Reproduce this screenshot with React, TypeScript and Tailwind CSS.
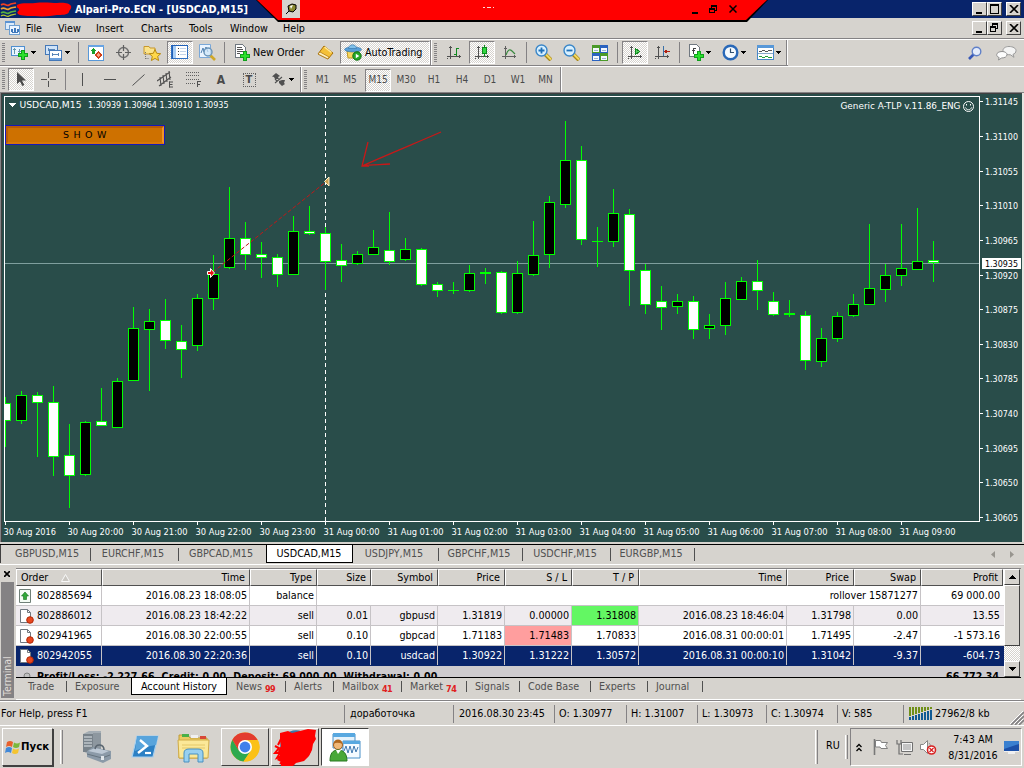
import type { ReactNode } from 'react';
import clsx from 'clsx';

const DITHER =
  'bg-[repeating-conic-gradient(#ffffff_0_25%,#d6d3ce_0_50%)] bg-[length:2px_2px]';
const RAISED =
  'border border-t-white border-l-white border-r-[#404040] border-b-[#404040] bg-[#d6d3ce]';
const SUNKEN =
  'border border-t-[#848284] border-l-[#848284] border-r-white border-b-white';

/* x step is 16px; values are [high, top, bottom, low, bull] in chart pixels */
type Candle = [number, number, number, number, 0 | 1];

const CANDLES: Candle[] = [
  [397, 403, 420, 447, 0], [391, 395, 420, 424, 1], [392, 395, 402, 457, 0], [386, 402, 456, 476, 0],
  [424, 455, 475, 508, 0], [421, 422, 474, 476, 1], [388, 421, 425, 426, 0], [378, 381, 427, 428, 1],
  [307, 328, 380, 381, 1], [309, 321, 329, 391, 1], [299, 320, 340, 349, 0], [325, 341, 349, 378, 0],
  [294, 298, 345, 351, 1], [255, 274, 298, 310, 1], [187, 238, 267, 269, 1], [222, 238, 254, 270, 0],
  [242, 254, 257, 278, 0], [254, 257, 274, 287, 0], [216, 231, 274, 275, 1], [206, 231, 233, 235, 0],
  [227, 233, 261, 290, 0], [244, 260, 265, 282, 0], [251, 254, 263, 265, 1], [230, 247, 254, 255, 1],
  [212, 250, 261, 265, 0], [238, 249, 259, 261, 1], [248, 249, 284, 286, 0], [282, 284, 290, 297, 0],
  [282, 290, 290, 294, 1], [265, 273, 290, 292, 1], [268, 272, 273, 284, 1], [271, 272, 312, 314, 0],
  [261, 273, 312, 314, 1], [221, 255, 274, 276, 1], [196, 202, 254, 268, 1], [121, 160, 204, 208, 1],
  [146, 160, 239, 245, 0], [227, 241, 241, 267, 1], [189, 213, 241, 247, 1], [209, 214, 270, 306, 0],
  [264, 270, 304, 314, 0], [286, 301, 307, 330, 0], [294, 301, 306, 314, 1], [296, 301, 329, 339, 0],
  [314, 325, 328, 339, 1], [282, 298, 325, 335, 1], [277, 281, 299, 300, 1], [260, 281, 290, 310, 0],
  [292, 301, 314, 316, 0], [300, 313, 314, 317, 1], [311, 315, 360, 370, 0], [328, 338, 361, 367, 1],
  [312, 316, 338, 342, 1], [294, 304, 315, 317, 1], [224, 288, 304, 305, 1], [264, 275, 289, 302, 1],
  [224, 268, 275, 286, 1], [208, 261, 269, 270, 1], [241, 260, 262, 282, 0],
];

const PRICES = [
  '1.31145', '1.31100', '1.31055', '1.31010', '1.30965', '1.30920', '1.30875',
  '1.30830', '1.30785', '1.30740', '1.30695', '1.30650', '1.30605',
];

const TIMES = [
  '30 Aug 2016', '30 Aug 20:00', '30 Aug 21:00', '30 Aug 22:00', '30 Aug 23:00',
  '31 Aug 00:00', '31 Aug 01:00', '31 Aug 02:00', '31 Aug 03:00', '31 Aug 04:00',
  '31 Aug 05:00', '31 Aug 06:00', '31 Aug 07:00', '31 Aug 08:00', '31 Aug 09:00',
];

interface IconProps {
  readonly w?: number;
  readonly h?: number;
  readonly smooth?: boolean;
  readonly children: ReactNode;
}

function Icon({ w = 16, h = 16, smooth = false, children }: IconProps) {
  return (
    <svg
      width={w}
      height={h}
      viewBox={`0 0 ${w} ${h}`}
      fill="none"
      className="block shrink-0"
      shapeRendering={smooth ? 'auto' : 'crispEdges'}
    >
      {children}
    </svg>
  );
}

function Slot({ w, pressed, children }: { w: string; pressed?: boolean; children: ReactNode }) {
  return (
    <div className={clsx('flex h-full shrink-0 items-center justify-center', w)}>
      {pressed ? (
        <div className={clsx('flex h-[23px] w-[26px] items-center justify-center', SUNKEN, DITHER)}>
          {children}
        </div>
      ) : (
        children
      )}
    </div>
  );
}

function Sep({ w = 'w-[7px]' }: { w?: string }) {
  return (
    <div className={clsx('flex h-full shrink-0 items-center justify-center', w)}>
      <div className="h-[21px] w-px bg-[#848284]" />
    </div>
  );
}

function Grip() {
  return (
    <div className="flex h-full w-[8px] shrink-0 items-center pl-[2px]">
      <div className="h-[19px] w-[3px] bg-[repeating-linear-gradient(#848284_0_1px,#d6d3ce_1px_2px)]" />
    </div>
  );
}

function Caret() {
  return (
    <Icon w={5} h={3}>
      <path d="M0 0h5v1H0zM1 1h3v1H1zM2 2h1v1H2z" fill="#000" />
    </Icon>
  );
}

function Plus({ x, y }: { x: number; y: number }) {
  return (
    <path
      d={`M${x + 3.5} ${y + 0.5}h3v3h3v3h-3v3h-3v-3h-3v-3h3z`}
      fill="#2be02b"
      stroke="#0fa01c"
    />
  );
}

/* ---------- title bar ---------- */

function WinButtons({ restore }: { restore?: boolean }) {
  const btn = clsx('flex h-[14px] w-[15px] items-center justify-center', RAISED);
  return (
    <div className="mr-[3px] flex items-center">
      <div className={btn}>
        <Icon w={11} h={10}><path d="M2 8h6v2H2z" fill="#000" /></Icon>
      </div>
      <div className={btn}>
        <Icon w={11} h={10}>
          {restore ? (
            <path d="M3 0h6v6H7v3H1V3h2zM4 2v1h3v2h1V2zM2 5v3h4V5z" fill="#000" fillRule="evenodd" />
          ) : (
            <path d="M1 0h9v10H1zM2 2v7h7V2z" fill="#000" fillRule="evenodd" />
          )}
        </Icon>
      </div>
      <div className={clsx(btn, 'ml-[4px]')}>
        <Icon w={10} h={8} smooth><path d="M1 0l8 8M9 0l-8 8" stroke="#000" strokeWidth="1.6" /></Icon>
      </div>
    </div>
  );
}

function ConnectionBar() {
  return (
    <div className="absolute left-[256px] top-0 h-[22px] w-[512px] bg-black [clip-path:polygon(0_0,100%_0,491px_100%,22px_100%)]">
      <div className="flex h-[21px] items-start bg-[#ff0000] [clip-path:polygon(1px_0,511px_0,490px_20px,22px_20px)]">
        <div className="ml-[26px] flex h-[18px] w-[18px] items-center justify-center bg-[#d6d3ce]">
          <Icon w={12} h={12} smooth>
            <path d="M1 11l4-4" stroke="#000" />
            <path d="M3 3l4-2 4 1v4l-3 3-4-1z" fill="#8a8a30" stroke="#000" />
            <path d="M5 3l3-1-2 4z" fill="#fff" />
          </Icon>
        </div>
        <div className="ml-[182px] mt-[6px]">
          <Icon w={12} h={2}><path d="M1 1h2M5 1h4M11 1h1" stroke="#ffd8d8" /></Icon>
        </div>
        <div className="ml-[197px] mt-[4px] flex items-center">
          <Icon w={7} h={10}><path d="M1 8h6v2H1z" fill="#000" /></Icon>
          <div className="ml-[11px]">
            <Icon w={9} h={10}>
              <path d="M2 1h6v6H6v2H0V4h2zM3 3v1h3v2h1V3zM1 6v2h4V6z" fill="#000" fillRule="evenodd" />
            </Icon>
          </div>
          <div className="ml-[11px]">
            <Icon w={8} h={8} smooth><path d="M.5 .5l7 7M7.5.5l-7 7" stroke="#000" strokeWidth="1.5" /></Icon>
          </div>
        </div>
      </div>
    </div>
  );
}

function TitleBar() {
  return (
    <div className="relative flex h-[18px] shrink-0 items-center bg-[#08246b] text-white">
      <Icon w={75} h={18} smooth>
        <path d="M1 5c4-3 5 2 8 0s4-1 7-2" stroke="#f04020" strokeWidth="1.6" />
        <path d="M1 9c4-3 5 2 8 0s4-1 7-2" stroke="#f0a030" strokeWidth="1.6" />
        <path d="M1 13c4-3 5 2 8 0s4-1 7-2" stroke="#58b040" strokeWidth="1.6" />
        <path d="M1 16c4-3 5 2 8 0s4-1 7-2" stroke="#b8c830" strokeWidth="1.3" />
        <path
          d="M17 5c6-3 12-1 18-2 9-1 17 0 22 0 6-1 13 0 14 3 1 3-2 4-2 6-1 3-8 3-12 3-6 1-14 2-22 1-6 0-14 0-17-2-2-3 2-3 1-5-1-1-3-2-2-4z"
          fill="#ff0000"
        />
      </Icon>
      <span className="pt-px text-[10.8px] font-bold">Alpari-Pro.ECN - [USDCAD,M15]</span>
      <div className="ml-auto"><WinButtons /></div>
      <ConnectionBar />
    </div>
  );
}

const MENU = [
  { label: 'File', w: 'w-[32px]' },
  { label: 'View', w: 'w-[38px]' },
  { label: 'Insert', w: 'w-[45px]' },
  { label: 'Charts', w: 'w-[48px]' },
  { label: 'Tools', w: 'w-[41px]' },
  { label: 'Window', w: 'w-[53px]' },
  { label: 'Help', w: 'w-[40px]' },
];

function MenuBar() {
  return (
    <div className="flex h-[21px] shrink-0 items-center border-b border-[#848284] pl-[5px] text-black">
      <div className="w-[21px]">
        <Icon w={15} h={14}>
          <path d="M.5 .5h9v8h-9z" fill="#dcebfa" stroke="#6f9fd0" />
          <path d="M0 0h10v2H0z" fill="#5b93d2" />
          <path d="M4.5 4.5h10v9h-10z" fill="#eef6ff" stroke="#6f9fd0" />
          <path d="M6 11V8h1v3h2V7h1v4h2V8h1v3" stroke="#3f78bb" />
        </Icon>
      </div>
      {MENU.map((m) => (
        <span key={m.label} className={clsx('pt-px', m.w)}>{m.label}</span>
      ))}
      <div className="ml-auto"><WinButtons restore /></div>
    </div>
  );
}

/* ---------- toolbars ---------- */

function Axes() {
  return (
    <>
      <path d="M3.5 1v13M0 11.5h14" stroke="#505050" />
      <path d="M2 2h3v1H2zM12 10h1v3h-1zM0 13h1v1H0z" fill="#505050" />
    </>
  );
}

function Lens({ minus }: { minus?: boolean }) {
  return (
    <Icon w={17} h={17} smooth>
      <path d="M10 10l6 6" stroke="#a88818" strokeWidth="4" />
      <path d="M10.5 10l5.5 5.5" stroke="#f4d860" strokeWidth="2" />
      <circle cx="6.5" cy="6.5" r="5.5" fill="#d8f0ff" stroke="#3a86c8" strokeWidth="1.4" />
      <path d={minus ? 'M3.5 6.5h6' : 'M3.5 6.5h6M6.5 3.5v6'} stroke="#2070b8" strokeWidth="1.8" />
    </Icon>
  );
}

function StandardToolbar() {
  return (
    <div className="flex h-[27px] shrink-0 border-t border-white">
      <div className="flex h-[26px] items-center border-b border-[#848284]">
        <Grip />
        <div className="flex w-[28px] items-center pl-[3px]">
          <Icon w={18} h={16}>
            <path d="M.5 1.5h13v9H.5z" fill="#eaf4ff" stroke="#4f8fd0" />
            <path d="M3 3v6M2 4h3M8 4v4M7 6h3" stroke="#69a" />
            <Plus x={7} y={5} />
          </Icon>
          <div className="ml-[2px]"><Caret /></div>
        </div>
        <div className="flex w-[38px] items-center pl-[9px]">
          <Icon w={18} h={16}>
            <path d="M.5 .5h12v9H.5z" fill="#cfe3f8" stroke="#4478b8" />
            <path d="M4.5 5.5h12v10h-12z" fill="#fff" stroke="#4478b8" />
            <path d="M5 13h11v2H5z" fill="#6ca0dc" />
            <path d="M3 4.5h7M3 3v3M7 9.5h7M7 8v3M13 8v3" stroke="#5885b8" />
          </Icon>
          <div className="ml-[2px]"><Caret /></div>
        </div>
        <Sep w="w-[8px]" />
        <Slot w="w-[27px]">
          <Icon>
            <path d="M.5 .5h15v15H.5z" fill="#fff" stroke="#5898d8" />
            <path d="M0 0h16v2H0z" fill="#68a4e4" />
            <path d="M5.5 3l3 3-1.5 0v3H4V6H2.5z" fill="#18a028" />
            <path d="M10.5 7l3 3-3 3-3-3z" fill="#f8a080" stroke="#d04018" />
          </Icon>
        </Slot>
        <Slot w="w-[28px]">
          <Icon w={15} h={15} smooth>
            <circle cx="7.5" cy="7.5" r="5" stroke="#707070" strokeWidth="1.4" />
            <path d="M7.5 0v6M7.5 9v6M0 7.5h6M9 7.5h6" stroke="#606060" strokeWidth="1.2" />
          </Icon>
        </Slot>
        <Slot w="w-[29px]">
          <Icon w={18} h={17} smooth>
            <path d="M1 2.500h5l1 1.500h5v6H1z" fill="#fbe38a" stroke="#c8982c" />
            <path d="M2.5 8v7M2.5 14.500h4" stroke="#777" strokeDasharray="1 1" />
            <path d="M12 5.5l1.700 3.800 4 .4-3 2.700.9 4.100-3.600-2.100-3.600 2.100.9-4.100-3-2.700 4-.4z" fill="#ffd84a" stroke="#b88a10" />
          </Icon>
        </Slot>
        <Slot w="w-[27px]" pressed>
          <Icon w={17} h={15}>
            <path d="M.5 .5h16v13H.5z" fill="#fff" stroke="#2f6fc0" />
            <path d="M1 1h4v12H1z" fill="#a8cdf4" />
            <path d="M0 0h17v1H0zM1 1h1v13H1z" fill="#2060b8" />
            <path d="M7 3.5h1M7 6.5h1M7 9.5h1" stroke="#444" />
            <path d="M9 3.5h6M9 6.5h6M9 9.5h6" stroke="#c4d4e8" />
          </Icon>
        </Slot>
        <Slot w="w-[28px]">
          <Icon w={17} h={17} smooth>
            <path d="M.5 .5h11v13H.5z" fill="#eaf4ff" stroke="#7aa8d8" />
            <path d="M2 9l2-5 1 4 2-5 2 5" stroke="#5080b0" />
            <path d="M11 11l5 5" stroke="#d0a828" strokeWidth="2.6" />
            <circle cx="9" cy="8" r="4" fill="#cde6f8" fillOpacity=".7" stroke="#6a94b8" strokeWidth="1.4" />
          </Icon>
        </Slot>
        <Sep />
        <div className="flex w-[82px] items-center pl-[6px]">
          <Icon w={17} h={17}>
            <path d="M1.5 .5h7l3 3v10h-10z" fill="#fff" stroke="#707880" />
            <path d="M3 3.5h5M3 5.5h6M3 7.5h6M3 9.5h3" stroke="#555" />
            <Plus x={6} y={7} />
          </Icon>
          <span className="ml-[2px] text-black">New Order</span>
        </div>
        <Slot w="w-[30px]">
          <Icon w={17} h={15} smooth>
            <path d="M7 1l9 7-5 6-10-5z" fill="#f4c038" stroke="#a87008" />
            <path d="M1 9l2-2 9 5-1 2z" fill="#fff0c0" stroke="#a87008" strokeWidth=".7" />
            <path d="M7.5 2l7 5.5" stroke="#ffe898" strokeWidth="1.5" />
          </Icon>
        </Slot>
        <div className={clsx('flex h-[23px] w-[90px] items-center pl-[3px]', SUNKEN, DITHER)}>
          <Icon w={18} h={17} smooth>
            <path d="M3 7h12l-2 7H4z" fill="#f8d860" stroke="#c09820" />
            <ellipse cx="9" cy="5.5" rx="8.5" ry="2.5" fill="#58a0d8" stroke="#3070a8" strokeWidth=".6" />
            <path d="M4.5 4.5c0-5 8-5 8 0z" fill="#80c0e8" stroke="#3070a8" strokeWidth=".6" />
            <circle cx="13" cy="12" r="4.2" fill="#28a828" stroke="#107010" />
            <path d="M11.8 9.8l3.5 2.2-3.5 2.2z" fill="#fff" />
          </Icon>
          <span className="ml-[3px] text-black">AutoTrading</span>
        </div>
      </div>
      <div className="flex h-[26px] items-center border-b border-l border-b-[#848284] border-l-[#848284]">
        <div className="h-full w-px bg-white" />
        <Grip />
        <Slot w="w-[28px]">
          <Icon w={15} h={15}>
            <Axes />
            <path d="M9.5 3v8M10 3.5h2M7 9.5h2" stroke="#108a20" />
          </Icon>
        </Slot>
        <Slot w="w-[28px]" pressed>
          <Icon w={15} h={15}>
            <Axes />
            <path d="M9.5 0v12" stroke="#108a20" />
            <path d="M7.5 2.5h4v6h-4z" fill="#30d840" stroke="#108a20" />
          </Icon>
        </Slot>
        <Slot w="w-[27px]">
          <Icon w={15} h={15} smooth>
            <path d="M3.5 1v13M0 11.5h14" stroke="#606060" />
            <path d="M2 3.5h3M12.500 10v3" stroke="#606060" />
            <path d="M4 10c2-6 4-6 6-4l3 3" stroke="#3a8a40" strokeWidth="1.2" />
          </Icon>
        </Slot>
        <Sep />
        <Slot w="w-[27px]"><Lens /></Slot>
        <Slot w="w-[29px]"><Lens minus /></Slot>
        <Slot w="w-[28px]">
          <Icon w={16} h={16}>
            <path d="M0 0h8v8H0z" fill="#4a9a28" />
            <path d="M8 0h8v8H8z" fill="#2a62c0" />
            <path d="M0 8h8v8H0z" fill="#2a62c0" />
            <path d="M8 8h8v8H8z" fill="#4a9a28" />
            <path d="M1 3h6v4H1zM9 3h6v4H9zM1 11h6v4H1zM9 11h6v4H9z" fill="#f4f8ff" />
            <path d="M2 5h4M10 5h4M2 13h4M10 13h4" stroke="#9ab4d0" />
          </Icon>
        </Slot>
        <Sep />
        <Slot w="w-[28px]" pressed>
          <Icon w={15} h={15}>
            <Axes />
            <path d="M7.5 3.5l4 3-4 3z" fill="#58d060" stroke="#108a20" />
          </Icon>
        </Slot>
        <Slot w="w-[27px]">
          <Icon w={15} h={15}>
            <Axes />
            <path d="M8.5 1v10" stroke="#3a70a8" />
            <path d="M9 6h6v1H9zM10 5h2v3h-2z" fill="#b02010" />
          </Icon>
        </Slot>
        <Sep />
        <div className="flex w-[31px] items-center pl-[6px]">
          <Icon w={16} h={17}>
            <path d="M.5 .5h7l3 3v9H.5z" fill="#fff" stroke="#707880" />
            <path d="M4 10V4h3M3 6.5h3" stroke="#444" />
            <Plus x={5} y={7} />
          </Icon>
          <div className="ml-px"><Caret /></div>
        </div>
        <div className="flex w-[35px] items-center pl-[8px]">
          <Icon w={17} h={17} smooth>
            <circle cx="8.5" cy="8.5" r="6.8" fill="#f4faff" stroke="#2868b8" strokeWidth="2.4" />
            <path d="M8.5 4.5v4h3.5" stroke="#305070" strokeWidth="1.2" />
          </Icon>
          <div className="ml-[2px]"><Caret /></div>
        </div>
        <div className="flex w-[37px] items-center pl-[8px]">
          <Icon w={17} h={15}>
            <path d="M.5 .5h16v14H.5z" fill="#fff" stroke="#4888c8" />
            <path d="M0 0h17v3H0z" fill="#5898d8" />
            <path d="M2 6.500h3M5 5.500h3M8 6.500h3M11 5.500h4" stroke="#555" />
            <path d="M1 8.5h15" stroke="#88a8c8" />
            <path d="M2 11.500h3M5 12.500h3M8 11.500h3M11 12.500h4" stroke="#28a038" />
          </Icon>
          <div className="ml-[2px]"><Caret /></div>
        </div>
        <div className="h-full w-px bg-[#848284]" />
        <div className="h-full w-px bg-white" />
      </div>
      <div className="ml-auto mr-[7px] flex items-center gap-[14px]">
        <Icon w={14} h={14} smooth>
          <path d="M1 13l5-5" stroke="#3858b8" strokeWidth="2.6" />
          <circle cx="8.5" cy="5.5" r="4.3" fill="#e4ecfc" stroke="#6080c8" strokeWidth="1.4" />
        </Icon>
        <Icon w={21} h={16} smooth>
          <path d="M13 1.5c4 0 7 1.800 7 4s-1.500 3.500-3 3.800l1 3-3.500-2.500c-5 0-7.500-2-7.500-4.300s2.500-4 6-4z" fill="#f4f4f4" stroke="#9a9a9a" />
          <path d="M6 6.5c3 0 5 1.400 5 3.200s-2 3.300-5.500 3.300L2.500 15l.6-2.500C1.500 12 .7 11 .7 9.700.7 8 3 6.500 6 6.500z" fill="#fdfdfd" stroke="#909090" />
        </Icon>
      </div>
    </div>
  );
}

const PERIODS = [
  { label: 'M1', w: 'w-[27px]' },
  { label: 'M5', w: 'w-[28px]' },
  { label: 'M15', w: 'w-[28px]', active: true },
  { label: 'M30', w: 'w-[28px]' },
  { label: 'H1', w: 'w-[28px]' },
  { label: 'H4', w: 'w-[28px]' },
  { label: 'D1', w: 'w-[28px]' },
  { label: 'W1', w: 'w-[28px]' },
  { label: 'MN', w: 'w-[27px]' },
];

function LineToolbar() {
  return (
    <div className="flex h-[26px] shrink-0 items-center border-t border-white text-[#4a4a4a]">
      <Grip />
      <Slot w="w-[26px]" pressed>
        <Icon w={10} h={15} smooth>
          <path d="M1 0v12l3-2.500L6.300 14l2-1L6 8.500h4z" fill="#4a4a4a" />
        </Icon>
      </Slot>
      <Slot w="w-[29px]">
        <Icon w={15} h={15}>
          <path d="M7.5 0v6M7.5 9v6M0 7.5h6M9 7.5h6" stroke="#505050" />
        </Icon>
      </Slot>
      <Sep w="w-[5px]" />
      <Slot w="w-[28px]">
        <Icon w={3} h={13}><path d="M1.5 0v13" stroke="#505050" /></Icon>
      </Slot>
      <Slot w="w-[28px]">
        <Icon w={12} h={3}><path d="M0 1.5h12" stroke="#505050" /></Icon>
      </Slot>
      <Slot w="w-[28px]">
        <Icon w={13} h={12} smooth><path d="M.5 11.5l12-11" stroke="#505050" /></Icon>
      </Slot>
      <Slot w="w-[27px]">
        <Icon w={17} h={17} smooth>
          <path d="M0 10L13 1M2 15l12-9M3 6l1 9M6 4l1 9M9 2l1 9M12 0l1 9" stroke="#505050" strokeWidth="1.1" />
          <path d="M12.5 10.5v6M12 11h4M12 13.5h3.500M12 16h4" stroke="#505050" />
        </Icon>
      </Slot>
      <Slot w="w-[28px]">
        <Icon w={15} h={17}>
          <path d="M0 1.5h14M0 4.5h14M0 8.5h14M0 12.5h9" stroke="#606060" strokeDasharray="1 1" />
          <path d="M11.5 10v6M11 10.5h4M11 13.5h3" stroke="#505050" />
        </Icon>
      </Slot>
      <Slot w="w-[28px]"><span className="text-[12px] font-bold">A</span></Slot>
      <Slot w="w-[28px]">
        <div className="flex h-[14px] w-[13px] items-center justify-center border border-dotted border-[#606060] text-[11px] font-bold leading-none">
          T
        </div>
      </Slot>
      <div className="flex w-[37px] items-center pl-[9px]">
        <Icon w={14} h={13} smooth>
          <path d="M4 0l4 3-2 1 1 2H3L2 4 0 3.500z" fill="#505050" />
          <path d="M3 10l7-6M3 6l2 2" stroke="#505050" strokeWidth="1.1" />
          <path d="M7 8l3-1h3l-1 3 1 1-3 2-3-3z" fill="#505050" />
        </Icon>
        <div className="ml-[3px]"><Caret /></div>
      </div>
      <div className="h-full w-px bg-[#848284]" />
      <div className="h-full w-px bg-white" />
      <Grip />
      <div className="-ml-px flex h-full items-center pt-px text-[10px]">
        {PERIODS.map((p) => (
          <Slot key={p.label} w={p.w} pressed={p.active}>{p.label}</Slot>
        ))}
      </div>
      <div className="ml-px h-full w-px bg-[#848284]" />
      <div className="h-full w-px bg-white" />
    </div>
  );
}

/* ---------- chart ---------- */

function Chart() {
  const lime = '#00ff00';
  return (
    <div className="relative flex h-[452px] shrink-0 flex-col border-b-2 border-b-[#d6d3ce]">
      <svg
        width="1024"
        height="450"
        viewBox="0 92 1024 450"
        className="block"
        shapeRendering="crispEdges"
        fontSize="9.4"
        fill="#fff"
      >
        <rect x="0" y="92" width="1024" height="450" fill="#294d4a" />
        <path d="M0 92h1024v1H0zM0 92h1v450H0z" fill="#848284" />
        <path d="M1 93h1022v1H1zM1 93h1v449H1z" fill="#404040" />
        <path d="M1022 93h2v449h-2z" fill="#e8e6e2" />
        <path d="M5 263.5h974" stroke="#7f9f9e" />
        <path d="M325.5 97v424" stroke="#fff" strokeDasharray="4 3" />
        {CANDLES.map(([high, top, bottom, low, bull], i) => {
          const x = 5 + i * 16;
          const left = Math.max(x - 5, 4);
          return (
            <g key={x}>
              <path d={`M${x + 0.5} ${high}V${low}`} stroke={lime} strokeWidth="1" />
              <rect x={left} y={top} width={x + 6 - left} height={bottom - top + 1} fill={lime} />
              {bottom - top > 1 && (
                <rect
                  x={left + 1}
                  y={top + 1}
                  width={x + 4 - left}
                  height={bottom - top - 1}
                  fill={bull ? '#000' : '#fff'}
                />
              )}
            </g>
          );
        })}
        <path d="M4 96.5h976M4.5 96v426M979.5 96v426M4 521.5h976" stroke="#fff" />
        <path d="M213 272l114-91" stroke="#c01818" strokeDasharray="4 2" shapeRendering="auto" strokeWidth="1" />
        <path d="M207.5 271.5h3v-3l4 4.500-4 4.500v-3h-3z" fill="#e81010" stroke="#fff" shapeRendering="auto" />
        <path d="M329 177v9l-4.500-4.500z" fill="#c8a050" stroke="#fff0c8" shapeRendering="auto" />
        <path
          d="M441 132c-25 11-50 21-79 34M368 142l-6 24 7 0M362 166c10-2 18-1 28-2"
          stroke="#c81818"
          strokeWidth="1.3"
          fill="none"
          shapeRendering="auto"
        />
        {PRICES.map((p, i) => {
          const y = Math.round(101.4 + i * 34.62);
          return (
            <g key={p}>
              <rect x="980" y={y} width="3" height="1" />
              <text x="985" y={y + 4} textLength="33" lengthAdjust="spacingAndGlyphs">{p}</text>
            </g>
          );
        })}
        {TIMES.map((t, i) => (
          <g key={t}>
            <rect x={5 + i * 64} y="522" width="1" height="3" />
            <text x={3.5 + i * 64} y="534.500" textLength={i === 0 ? 52.5 : 56} lengthAdjust="spacingAndGlyphs">{t}</text>
          </g>
        ))}
        <rect x="982" y="258" width="39" height="11" fill="#fff" />
        <text x="985" y="267" fill="#000" textLength="33" lengthAdjust="spacingAndGlyphs">1.30935</text>
        <path d="M8 103h8l-4 4z" />
        <text x="19.5" y="108" textLength="62" lengthAdjust="spacingAndGlyphs">USDCAD,M15</text>
        <text x="88" y="108" textLength="140.500" lengthAdjust="spacingAndGlyphs">1.30939 1.30964 1.30910 1.30935</text>
        <text x="840.5" y="109" textLength="120" lengthAdjust="spacingAndGlyphs">Generic A-TLP v.11.86_ENG</text>
        <g fill="none" stroke="#fff" shapeRendering="auto">
          <circle cx="968.5" cy="106.5" r="5" />
          <path d="M965.5 107.5c1 3 5 3 6 0M966.5 104v1.500M970.5 104v1.500" />
        </g>
      </svg>
      <button
        type="button"
        className="absolute left-[5px] top-[33px] flex h-[20px] w-[160px] items-center justify-center border border-[#1818b8] bg-[#ce7100]"
      >
        <span className="flex h-full w-full items-center justify-center border-2 border-b-[#d87808] border-l-[#b85a08] border-r-[#f09428] border-t-[#b85a08] font-['DejaVu_Sans'] text-[9.5px] tracking-[0.7px] text-black">
          S H O W
        </span>
      </button>
    </div>
  );
}

const CHART_TABS = [
  { label: 'GBPUSD,M15', w: 'w-[84px]' },
  { label: 'EURCHF,M15', w: 'w-[88px]' },
  { label: 'GBPCAD,M15', w: 'w-[87px]' },
  { label: 'USDCAD,M15', w: 'w-[87px]', active: true },
  { label: 'USDJPY,M15', w: 'w-[86px]' },
  { label: 'GBPCHF,M15', w: 'w-[84px]' },
  { label: 'USDCHF,M15', w: 'w-[88px]' },
  { label: 'EURGBP,M15', w: 'w-[84px]' },
];

function ChartTabs() {
  return (
    <div className="flex h-[21px] shrink-0 border-b border-t border-b-white border-t-black text-[#505050]">
      <div className="h-[18px] w-[7px] border-l border-[#404040]" />
      {CHART_TABS.map((t, i) => (
        <div
          key={t.label}
          className={clsx(
            'flex h-[18px] items-center justify-center',
            t.w,
            t.active && 'border border-t-0 border-black bg-white text-black',
          )}
        >
          <span className={clsx('w-full text-center', t.active ? 'pr-px' : 'pr-[3px]')}>{t.label}</span>
          {!t.active && i !== 2 && <span className="h-[13px] w-px bg-[#505050]" />}
        </div>
      ))}
      <div className="ml-auto mr-[10px] flex items-center gap-[15px]">
        <Icon w={4} h={7} smooth><path d="M4 0v7L0 3.500z" fill="#98958f" /></Icon>
        <Icon w={4} h={7} smooth><path d="M0 0v7l4-3.500z" fill="#98958f" /></Icon>
      </div>
    </div>
  );
}

/* ---------- terminal ---------- */

const COLS = [
  { label: 'Order', w: 'w-[86px]' },
  { label: 'Time', w: 'w-[148px]' },
  { label: 'Type', w: 'w-[67px]' },
  { label: 'Size', w: 'w-[54px]' },
  { label: 'Symbol', w: 'w-[67px]' },
  { label: 'Price', w: 'w-[67px]' },
  { label: 'S / L', w: 'w-[67px]' },
  { label: 'T / P', w: 'w-[67px]' },
  { label: 'Time', w: 'w-[148px]' },
  { label: 'Price', w: 'w-[67px]' },
  { label: 'Swap', w: 'w-[67px]' },
  { label: 'Profit', w: 'w-[82px]' },
];

interface Deal {
  cells: string[];
  row: string;
  sl?: boolean;
  tp?: boolean;
}

const DEALS: Deal[] = [
  {
    cells: ['802886012', '2016.08.23 18:42:22', 'sell', '0.01', 'gbpusd', '1.31819', '0.00000', '1.31808', '2016.08.23 18:46:04', '1.31798', '0.00', '13.55'],
    row: 'bg-[#efebef] border-[#c6c3c6]',
    tp: true,
  },
  {
    cells: ['802941965', '2016.08.30 22:00:55', 'sell', '0.10', 'gbpcad', '1.71183', '1.71483', '1.70833', '2016.08.31 00:00:01', '1.71495', '-2.47', '-1 573.16'],
    row: 'bg-white border-[#c6c3c6]',
    sl: true,
  },
  {
    cells: ['802942055', '2016.08.30 22:20:36', 'sell', '0.10', 'usdcad', '1.30922', '1.31222', '1.30572', '2016.08.31 00:00:10', '1.31042', '-9.37', '-604.73'],
    row: 'bg-[#08246b] border-[#08246b] text-white',
  },
];

function SellIcon() {
  return (
    <Icon w={14} h={15} smooth>
      <path d="M.5 .5h7l3 3v10H.5z" fill="#fff" stroke="#707880" />
      <path d="M7.5 .5v3h3" stroke="#707880" />
      <circle cx="10" cy="11" r="3.3" fill="#e84820" stroke="#b02808" />
    </Icon>
  );
}

function HistoryTable() {
  return (
    <div className="flex h-[108px] w-[988px] flex-col overflow-hidden bg-white text-black">
      <div className="flex h-[17px] shrink-0">
        {COLS.map((c, i) => (
          <div
            key={i}
            className={clsx(
              'flex items-center border border-b-[#505050] border-l-white border-r-[#505050] border-t-white bg-[#d6d3ce] pt-px',
              i === 0 ? 'pl-[4px]' : 'justify-end pr-[4px]',
              c.w,
            )}
          >
            {c.label}
            {i === 0 && (
              <div className="ml-[13px]">
                <Icon w={9} h={8} smooth><path d="M4.5 .5l4 7h-8z" stroke="#f8f8f8" fill="#cac7c2" /></Icon>
              </div>
            )}
          </div>
        ))}
      </div>
      <div className="flex h-[20px] shrink-0 border-b border-[#c6c3c6] pt-px">
        <div className="-mt-px flex w-[86px] items-center border-r border-[#c6c3c6] pl-[3px] pt-px">
          <Icon w={12} h={14} smooth>
            <path d="M.5 .5h11v13H.5z" fill="#f4fbf4" stroke="#708078" />
            <path d="M6 3l3.500 4H7.500v3.500h-3V7h-2z" fill="#30a838" stroke="#107018" strokeWidth=".6" />
          </Icon>
          <span className="ml-[6px]">802885694</span>
        </div>
        <div className="-mt-px flex w-[148px] items-center justify-end border-r border-[#c6c3c6] pr-[2px] pt-px">2016.08.23 18:08:05</div>
        <div className="-mt-px flex w-[67px] items-center justify-end border-r border-[#c6c3c6] pr-[2px] pt-px">balance</div>
        <div className="-mt-px flex w-[604px] items-center justify-end border-r border-[#c6c3c6] pr-[2px] pt-px">rollover 15871277</div>
        <div className="flex w-[82px] items-center justify-end pr-[3px]">69 000.00</div>
      </div>
      {DEALS.map((d) => (
        <div key={d.cells[0]} className={clsx('flex h-[20px] shrink-0 border-b', d.row)}>
          {d.cells.map((text, i) => (
            <div
              key={i}
              className={clsx(
                'flex items-center border-[#c6c3c6] pt-px',
                COLS[i].w,
                i === 0 && 'pl-[4px]',
                i > 0 && 'justify-end',
                i > 0 && i < 11 && 'pr-[2px]',
                i < 11 ? 'border-r' : 'pr-[3px]',
                i === 6 && d.sl && 'bg-[#ff9e9e]',
                i === 7 && d.tp && 'bg-[#63f763]',
              )}
            >
              {i === 0 ? (
                <>
                  <SellIcon />
                  <span className="ml-[3px]">{text}</span>
                </>
              ) : (
                text
              )}
            </div>
          ))}
        </div>
      ))}
      <div className="flex h-[20px] shrink-0 items-center bg-[#cecbce] pl-[7px] pr-[5px] text-[10.5px] font-bold">
        <Icon w={8} h={8} smooth><circle cx="4" cy="4" r="3" fill="#c0c0c0" stroke="#808080" /></Icon>
        <span className="ml-[6px] whitespace-pre tracking-[0.15px]">Profit/Loss: -2 227.66  Credit: 0.00  Deposit: 69 000.00  Withdrawal: 0.00</span>
        <span className="ml-auto">66 772.34</span>
      </div>
    </div>
  );
}

function ScrollBar() {
  return (
    <div className={clsx('flex h-[108px] w-[16px] flex-col', DITHER)}>
      <div className={clsx('flex h-[16px] items-center justify-center', RAISED)}>
        <Icon w={7} h={4}><path d="M3 0h1v1H3zM2 1h3v1H2zM1 2h5v1H1zM0 3h7v1H0z" fill="#000" /></Icon>
      </div>
      <div className={clsx('h-[61px]', RAISED)} />
      <div className={clsx('mt-auto flex h-[16px] items-center justify-center', RAISED)}>
        <Icon w={7} h={4}><path d="M0 0h7v1H0zM1 1h5v1H1zM2 2h3v1H2zM3 3h1v1H3z" fill="#000" /></Icon>
      </div>
    </div>
  );
}

const TERMINAL_TABS = [
  { label: 'Trade', w: 'w-[51px]', pad: 'pl-[12px]' },
  { label: 'Exposure', w: 'w-[64px]', pad: 'pl-[8px]', bare: true },
  { label: 'Account History', w: 'w-[96px]', pad: 'justify-center', active: true },
  { label: 'News', badge: '99', w: 'w-[59px]', pad: 'pl-[9px]' },
  { label: 'Alerts', w: 'w-[48px]', pad: 'pl-[8px]' },
  { label: 'Mailbox', badge: '41', w: 'w-[68px]', pad: 'pl-[8px]' },
  { label: 'Market', badge: '74', w: 'w-[65px]', pad: 'pl-[8px]' },
  { label: 'Signals', w: 'w-[53px]', pad: 'pl-[8px]' },
  { label: 'Code Base', w: 'w-[71px]', pad: 'pl-[8px]' },
  { label: 'Experts', w: 'w-[57px]', pad: 'pl-[8px]' },
  { label: 'Journal', w: 'w-[55px]', pad: 'pl-[8px]' },
];

function Terminal() {
  return (
    <div className="flex h-[136px] shrink-0 border-b border-[#848284]">
      <div className="flex w-[16px] flex-col pl-px">
        <div className="flex h-[17px] w-[12px] items-center justify-center">
          <Icon w={6} h={6} smooth><path d="M0 0l6 6M6 0L0 6" stroke="#000" strokeWidth="1.6" /></Icon>
        </div>
        <div className="flex h-[116px] w-[13px] items-center bg-[#848284] text-[10.5px] text-[#e0ddd8]">
          <span className="h-full w-[13px] rotate-180 pt-[2px] leading-[13px] [writing-mode:vertical-rl]">Terminal</span>
        </div>
      </div>
      <div className="flex w-[1005px] flex-col border-b border-white pt-[3px]">
        <div className="flex h-[109px] border-t border-[#848284]">
          <HistoryTable />
          <ScrollBar />
        </div>
        <div className="flex h-[19px] border-t border-black text-[#505050]">
          {TERMINAL_TABS.map((t) => (
            <div
              key={t.label}
              className={clsx(
                'flex h-[17px] shrink-0 items-center',
                t.w,
                t.pad,
                t.active && 'border border-t-0 border-black bg-white pt-px text-black',
              )}
            >
              <span className="whitespace-nowrap">{t.label}</span>
              {t.badge && (
                <span className="ml-[3px] mt-[6px] text-[9px] font-bold leading-none tracking-[-0.5px] text-[#e02020]">{t.badge}</span>
              )}
              {!t.active && !t.bare && <span className="ml-auto h-[11px] w-px bg-[#505050]" />}
            </div>
          ))}
        </div>
      </div>
    </div>
  );
}

const STATUS = [
  { text: 'доработочка', w: 'w-[109px]', pad: 'pl-[5px]' },
  { text: '2016.08.30 23:45', w: 'w-[101px]', pad: 'pl-[5px]' },
  { text: 'O: 1.30977', w: 'w-[72px]', pad: 'pl-[4px]' },
  { text: 'H: 1.31007', w: 'w-[71px]', pad: 'pl-[4px]' },
  { text: 'L: 1.30973', w: 'w-[69px]', pad: 'pl-[4px]' },
  { text: 'C: 1.30974', w: 'w-[71px]', pad: 'pl-[4px]' },
  { text: 'V: 585', w: 'w-[66px]', pad: 'pl-[4px]' },
];

function StatusBar() {
  return (
    <div className="flex h-[25px] shrink-0 items-center border-b border-t border-white pl-px text-black">
      <span className="w-[343px] pt-px">For Help, press F1</span>
      {STATUS.map((s) => (
        <div key={s.text} className={clsx('flex h-[18px] items-center border-l border-[#848284] pt-px', s.w, s.pad)}>
          {s.text}
        </div>
      ))}
      <div className="flex h-[18px] items-center border-l border-[#848284] pl-[5px]">
        <Icon w={23} h={13}>
          {[0, 1, 2, 3, 4, 5, 6, 7].map((i) => (
            <g key={i}>
              <rect x={i * 3} y="0" width="2" height={9 - i} fill="#6f8f18" />
              <rect x={i * 3} y={10 - i} width="2" height={3 + i} fill="#105a94" />
            </g>
          ))}
        </Icon>
        <span className="ml-[3px] pt-px">27962/8 kb</span>
      </div>
      <div className="ml-auto self-end">
        <Icon w={14} h={14} smooth>
          <path d="M1 14L14 1M5 14l9-9M9 14l5-5" stroke="#848284" strokeWidth="1.6" />
          <path d="M0 13L13 0M4 13l9-9M8 13l5-5" stroke="#fff" />
        </Icon>
      </div>
    </div>
  );
}

/* ---------- taskbar ---------- */

function ServerIcon() {
  return (
    <Icon w={30} h={32} smooth>
      <path d="M2 3l6-3h12v24H8l-6-4z" fill="#a4adb4" />
      <path d="M2 3h10v18H2z" fill="#78828a" />
      <path d="M3 6h8M3 9h8M3 12h8M3 15h8" stroke="#e0e6ea" strokeWidth="1.2" />
      <path d="M12 2h8v20h-8z" fill="#8d979f" />
      <path d="M6 20l6-4 18 4v8l-8 4-16-6z" fill="#8b9aa8" />
      <path d="M7 20l7-3 14 3-7 3z" fill="#bcc8d4" />
      <path d="M14 18c1-6 9-5 9 1" stroke="#5a6670" strokeWidth="1.6" />
      <path d="M6 23l15 4 8-3" stroke="#66747f" />
      <path d="M20 25h3v4h-3z" fill="#e0e6ea" />
    </Icon>
  );
}

function PowerShellIcon() {
  return (
    <Icon w={28} h={24} smooth>
      <path d="M6 1h21l-5 21H1z" fill="#2c80c4" stroke="#a8d0ee" strokeWidth="1.2" />
      <path d="M6 1h21l-2 9c-8 1-14 3-21 6z" fill="#58a4dc" />
      <path d="M9 5l7 6-9 7" stroke="#fff" strokeWidth="2.4" />
      <path d="M14 18h6" stroke="#fff" strokeWidth="2.2" />
    </Icon>
  );
}

function FolderIcon() {
  return (
    <Icon w={33} h={31} smooth>
      <path d="M2 3h9l2 3h17v20H2z" fill="#eacb62" stroke="#c09c38" />
      <path d="M5 2h7v3H5z" fill="#48b048" />
      <path d="M14 3h7v3h-7z" fill="#f0f0f0" />
      <path d="M23 4h6v3h-6z" fill="#d84838" />
      <path d="M1 8h31l-1 18H2z" fill="#fbe898" stroke="#d0ac48" />
      <path d="M5 13h23M5 16h23" stroke="#e4c868" />
      <path d="M7 30V21c0-3 2-4 5-4h9c3 0 5 1 5 4v9h-5v-8h-9v8z" fill="#98d0f0" stroke="#4890c0" />
    </Icon>
  );
}

function ChromeIcon() {
  return (
    <Icon w={30} h={30} smooth>
      <circle cx="15" cy="15" r="14.5" fill="#fbc116" />
      <path d="M2.4 7.800A14.5 14.5 0 0 0 13.5 29.400L21 18.500 9 18.500z" fill="#2da94f" />
      <path d="M27.6 7.800A14.5 14.5 0 0 1 13.5 29.400L21 18.500 20 8z" fill="#fbc116" />
      <path d="M2.4 7.800L8.500 18l5.500-10h13.600A14.5 14.5 0 0 0 2.4 7.800z" fill="#e33b2e" />
      <circle cx="15" cy="15" r="7" fill="#fff" />
      <circle cx="15" cy="15" r="5.4" fill="#3f80ea" />
    </Icon>
  );
}

function ScribbleIcon() {
  return (
    <svg width="46" height="37" viewBox="0 0 46 37" className="block" fill="none">
      <circle cx="24" cy="17" r="14.5" fill="#c8e0f0" stroke="#3878a8" strokeWidth="2.5" />
      <path d="M8 4l8-2 4 2 8-2 8-2 8 1-1 6 1 3-3 5-1 6-3 6-5 5-8 2-3 3-5 2-7-1 0-5-4-2 3-4-2-5 3-5-1-6z" fill="#ff0000" />
      <path d="M3 17l4 2-4 5 5 0-3 5 6-2M9 10l-3 6M12 30l-4 5M20 29l-1 6" stroke="#ff0000" strokeWidth="2" />
    </svg>
  );
}

function TerminalAppIcon() {
  return (
    <Icon w={32} h={30} smooth>
      <path d="M4 2h22v14H4z" fill="#e4f2fc" stroke="#4890c8" />
      <path d="M4 1h22v4H4z" fill="#58a8e0" />
      <path d="M14 9h17v17H14z" fill="#f4faff" stroke="#4890c8" />
      <path d="M14 9h17v3H14z" fill="#58a8e0" />
      <path d="M15 19l2-5 2 7 2-7 2 7 2-7 2 6 2-5" stroke="#4078b0" />
      <circle cx="9" cy="13" r="4.5" fill="#f0b878" stroke="#a06020" />
      <path d="M4.5 12c0-6 9-6 9 0-3-1-6-2-9 0z" fill="#b06820" />
      <path d="M1 29c0-8 3-11 8-11s9 3 9 11z" fill="#48a838" stroke="#287820" />
      <path d="M7 18l2 4 3-4z" fill="#fff" />
    </Icon>
  );
}

function TaskBar() {
  const chiselled = 'w-[3px] border-l border-r border-l-white border-r-[#848284]';
  return (
    <div className="flex h-[42px] shrink-0 items-center pl-[2px] text-black">
      <button type="button" className={clsx('flex h-[38px] w-[51px] items-center pl-[2px] shadow-[1px_1px_0_#404040]', RAISED)}>
        <Icon w={16} h={15} smooth>
          <path d="M2 2c2-1.500 4-1.500 6 0L7 7C5 5.500 3 5.500 1 7z" fill="#e8602c" />
          <path d="M9 2.500c2 1.200 4 1.200 6 0L14 7c-2 1.200-4 1.200-6 0z" fill="#7ab83c" />
          <path d="M1 8c2-1.500 4-1.500 6 0l-1 5c-2-1.500-4-1.500-6 0z" fill="#4088d8" />
          <path d="M8 8.500c2 1.200 4 1.200 6 0L13 13c-2 1.200-4 1.200-6 0z" fill="#f4c430" />
        </Icon>
        <span className="text-[11.3px] font-bold">Пуск</span>
      </button>
      <div className={clsx('ml-[7px] h-[34px]', chiselled)} />
      <div className="ml-[18px] w-[50px]"><ServerIcon /></div>
      <div className="w-[46px]"><PowerShellIcon /></div>
      <div className="w-[44px]"><FolderIcon /></div>
      <div className={clsx('flex h-[38px] w-[48px] items-center justify-center', RAISED)}><ChromeIcon /></div>
      <div className={clsx('ml-[2px] flex h-[38px] w-[48px] items-center justify-center', RAISED)}><ScribbleIcon /></div>
      <div className="ml-[2px] flex h-[38px] w-[48px] items-center justify-center border border-b-white border-l-[#404040] border-r-white border-t-[#404040] bg-white">
        <TerminalAppIcon />
      </div>
      <div className={clsx('ml-auto h-[34px]', chiselled)} />
      <span className="mb-[3px] ml-[8px] w-[18px]">RU</span>
      <div className={clsx('ml-px h-[24px]', chiselled)} />
      <div className={clsx('ml-[2px] mr-[2px] flex h-[38px] w-[172px] items-center', SUNKEN)}>
        <div className="ml-[5px]">
          <Icon w={6} h={9} smooth><path d="M.5 4L3 1.500 5.500 4M.5 8L3 5.500 5.500 8" stroke="#000" strokeWidth="1.3" /></Icon>
        </div>
        <div className="ml-[10px]">
          <Icon w={17} h={16} smooth>
            <path d="M2.5 0v16" stroke="#787878" strokeWidth="1.6" />
            <path d="M3.5 1.500h5l1 2h6l-2 3 2 3H9l-1-1.500H3.500z" fill="#fff" stroke="#808080" />
          </Icon>
        </div>
        <div className="ml-[7px]">
          <Icon w={17} h={17} smooth>
            <path d="M5.5 3.500h11v9h-11z" fill="#f4f4f4" stroke="#707070" />
            <path d="M7 5h8v6H7z" fill="#c4c4c4" />
            <path d="M8 15.500h7M1 1v4h4V1M3 5v10h4" stroke="#707070" strokeWidth="1.2" />
          </Icon>
        </div>
        <div className="ml-[7px]">
          <Icon w={17} h={15} smooth>
            <path d="M.5 4.500h3l4-4v13l-4-4h-3z" fill="#fff" stroke="#888" />
            <path d="M9 3c1.500 1.500 2 3 2 5" stroke="#999" />
            <circle cx="11.5" cy="10" r="4" fill="#fff" stroke="#d82020" strokeWidth="1.6" />
            <path d="M9.5 8l4 4M13.5 8l-4 4" stroke="#d82020" strokeWidth="1.3" />
          </Icon>
        </div>
        <div className="ml-[8px] w-[56px] pt-px text-center leading-[16px]">
          <div>7:43 AM</div>
          <div>8/31/2016</div>
        </div>
        <div className="ml-[3px]">
          <Icon w={15} h={13} smooth>
            <path d="M0 0h15v10H0z" fill="#1c50a8" />
            <path d="M0 0h15v3L0 8z" fill="#3a80d0" />
            <path d="M0 10h15v1H0zM4 11h7v2H4z" fill="#f0f0f0" />
          </Icon>
        </div>
      </div>
    </div>
  );
}

export default function App() {
  return (
    <div className="flex h-[768px] w-[1024px] flex-col overflow-hidden whitespace-nowrap bg-[#d6d3ce] font-['DejaVu_Sans_Condensed','DejaVu_Sans',sans-serif] text-[10.7px] leading-[14px]">
      <TitleBar />
      <MenuBar />
      <StandardToolbar />
      <LineToolbar />
      <Chart />
      <ChartTabs />
      <Terminal />
      <StatusBar />
      <TaskBar />
    </div>
  );
}
